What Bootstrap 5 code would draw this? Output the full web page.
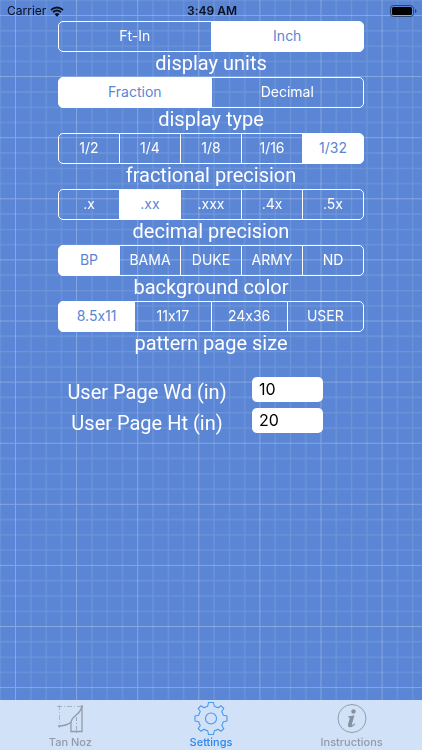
<!DOCTYPE html>
<html lang="en">
<head>
<meta charset="utf-8">
<meta name="viewport" content="width=device-width, initial-scale=1">
<title>Settings</title>
<link href="https://cdn.jsdelivr.net/npm/bootstrap@5.3.0/dist/css/bootstrap.min.css" rel="stylesheet">
<style>
  :root { --paper: #5a86d5; }
  body { background: var(--paper); font-family: Inter, "Liberation Sans", sans-serif; font-feature-settings: "calt" 0; color: #fff; }
  .blueprint { z-index: -1; }
  .status { display: grid; grid-template-columns: 1fr auto 1fr; height: 21px; padding: 0 5px 0 7px; color: #0b1020; font-size: 12px; line-height: 22px; }
  .status svg { display: block; }
  .settings { padding: 0 58px; }
  .segments { height: 31px; }
  .segments .btn {
    --bs-btn-color: #fff; --bs-btn-border-color: #fff;
    --bs-btn-hover-color: #fff; --bs-btn-hover-border-color: #fff;
    --bs-btn-active-color: var(--paper); --bs-btn-active-bg: #fff; --bs-btn-active-border-color: #fff;
    --bs-btn-border-radius: 5px;
    flex: 1 1 0; padding: 0; font-size: 14px; line-height: 28px;
  }
  .caption, .page-size label { font-family: Roboto, "Liberation Sans", sans-serif; font-size: 20px; text-align: center; }
  .caption { line-height: 22px; margin-bottom: 3px; }
  .page-size { display: grid; grid-template-columns: 178px 71px; column-gap: 16px; margin-top: 20px; }
  .page-size label { line-height: 31px; white-space: nowrap; }
  .page-size .form-control { height: 25px; padding: 0 7px; border: 0; border-radius: 5px; font-size: 16px; line-height: 25px; color: #000; background: #fff; }
  .tabs { background: #d1e1f8; height: 50px; font-size: 11px; line-height: 14px; font-weight: 500; }
  .tabs a { color: #939ba8; padding-top: 2px; }
  .tabs a.active { color: #2d86e8; }
  .tabs svg { display: block; }
</style>
<script src="https://cdn.jsdelivr.net/npm/bootstrap@5.3.0/dist/js/bootstrap.bundle.min.js"></script>
</head>
<body class="d-flex flex-column min-vh-100">
<svg class="blueprint position-fixed top-0 start-0 w-100 h-100" aria-hidden="true">
  <defs>
    <pattern id="grid" width="611" height="611" patternUnits="userSpaceOnUse" patternTransform="translate(15 15) scale(.1)">
      <path d="M158 0V611M311 0V611M464 0V611M0 158H611M0 311H611M0 464H611" stroke="#fff" stroke-opacity=".12" stroke-width="13"/>
      <path d="M5 0V611M0 5H611" stroke="#fff" stroke-opacity=".27" stroke-width="10"/>
    </pattern>
  </defs>
  <rect width="100%" height="100%" fill="url(#grid)"/>
</svg>

<header class="status">
  <div class="d-flex align-items-center gap-1">
    <span>Carrier</span>
    <svg width="14" height="11" viewBox="0 0 14 11" fill="none" stroke="#0b1020"><path d="M1 4Q7-1 13 4M3 6.300Q7 2.800 11 6.300" stroke-width="1.800"/><path d="M4.600 8.200Q7 6 9.400 8.200L7 10.700Z" fill="#0b1020" stroke="none"/></svg>
  </div>
  <div class="fw-semibold">3:49 AM</div>
  <div class="d-flex align-items-center justify-content-end">
    <svg width="27" height="12" viewBox="0 0 27 12"><rect x=".5" y=".5" width="23" height="11" rx="3" fill="none" stroke="#2c426d"/><rect x="2" y="2" width="20" height="8" rx="1.500" fill="#000"/><path d="M25 4Q26.500 4.500 26.500 6T25 8Z" fill="#2c426d"/></svg>
  </div>
</header>

<main class="settings flex-grow-1">
  <fieldset class="d-flex flex-column">
    <div class="btn-group segments" role="group" aria-labelledby="c-units">
      <input class="btn-check" type="radio" name="units" id="u1"><label class="btn" for="u1">Ft-In</label>
      <input class="btn-check" type="radio" name="units" id="u2" checked><label class="btn" for="u2">Inch</label>
    </div>
    <div class="caption" id="c-units">display units</div>
  </fieldset>
  <fieldset class="d-flex flex-column">
    <div class="btn-group segments" role="group" aria-labelledby="c-type">
      <input class="btn-check" type="radio" name="type" id="t1" checked><label class="btn" for="t1">Fraction</label>
      <input class="btn-check" type="radio" name="type" id="t2"><label class="btn" for="t2">Decimal</label>
    </div>
    <div class="caption" id="c-type">display type</div>
  </fieldset>
  <fieldset class="d-flex flex-column">
    <div class="btn-group segments" role="group" aria-labelledby="c-frac">
      <input class="btn-check" type="radio" name="frac" id="f1"><label class="btn" for="f1">1/2</label>
      <input class="btn-check" type="radio" name="frac" id="f2"><label class="btn" for="f2">1/4</label>
      <input class="btn-check" type="radio" name="frac" id="f3"><label class="btn" for="f3">1/8</label>
      <input class="btn-check" type="radio" name="frac" id="f4"><label class="btn" for="f4">1/16</label>
      <input class="btn-check" type="radio" name="frac" id="f5" checked><label class="btn" for="f5">1/32</label>
    </div>
    <div class="caption" id="c-frac">fractional precision</div>
  </fieldset>
  <fieldset class="d-flex flex-column">
    <div class="btn-group segments" role="group" aria-labelledby="c-dec">
      <input class="btn-check" type="radio" name="dec" id="d1"><label class="btn" for="d1">.x</label>
      <input class="btn-check" type="radio" name="dec" id="d2" checked><label class="btn" for="d2">.xx</label>
      <input class="btn-check" type="radio" name="dec" id="d3"><label class="btn" for="d3">.xxx</label>
      <input class="btn-check" type="radio" name="dec" id="d4"><label class="btn" for="d4">.4x</label>
      <input class="btn-check" type="radio" name="dec" id="d5"><label class="btn" for="d5">.5x</label>
    </div>
    <div class="caption" id="c-dec">decimal precision</div>
  </fieldset>
  <fieldset class="d-flex flex-column">
    <div class="btn-group segments" role="group" aria-labelledby="c-bg">
      <input class="btn-check" type="radio" name="bg" id="b1" checked><label class="btn" for="b1">BP</label>
      <input class="btn-check" type="radio" name="bg" id="b2"><label class="btn" for="b2">BAMA</label>
      <input class="btn-check" type="radio" name="bg" id="b3"><label class="btn" for="b3">DUKE</label>
      <input class="btn-check" type="radio" name="bg" id="b4"><label class="btn" for="b4">ARMY</label>
      <input class="btn-check" type="radio" name="bg" id="b5"><label class="btn" for="b5">ND</label>
    </div>
    <div class="caption" id="c-bg">background color</div>
  </fieldset>
  <fieldset class="d-flex flex-column">
    <div class="btn-group segments" role="group" aria-labelledby="c-size">
      <input class="btn-check" type="radio" name="size" id="s1" checked><label class="btn" for="s1">8.5x11</label>
      <input class="btn-check" type="radio" name="size" id="s2"><label class="btn" for="s2">11x17</label>
      <input class="btn-check" type="radio" name="size" id="s3"><label class="btn" for="s3">24x36</label>
      <input class="btn-check" type="radio" name="size" id="s4"><label class="btn" for="s4">USER</label>
    </div>
    <div class="caption" id="c-size">pattern page size</div>
  </fieldset>

  <div class="page-size">
    <label for="wd">User Page Wd (in)</label><input class="form-control" id="wd" type="text" inputmode="decimal" value="10">
    <label for="ht">User Page Ht (in)</label><input class="form-control" id="ht" type="text" inputmode="decimal" value="20">
  </div>
</main>

<nav class="tabs sticky-bottom d-flex">
  <a href="#noz" class="d-flex flex-column align-items-center flex-fill w-100 text-decoration-none">
    <svg width="32" height="33" viewBox="0 0 32 33" fill="none" stroke="#939ba8">
      <path d="M3 4.500H30" stroke-dasharray="5 2 1 2" stroke-opacity=".7"/><path d="M5.500 3V26" stroke-dasharray="5 2 1 2" stroke-opacity=".6"/>
      <path d="M4 24Q13 24 17 20C18 13 26 14 28 4" stroke-width="1.300"/><path d="M17 20V29.500H28V3" stroke-width="1.300"/><path d="M22.500 15V31" stroke-dasharray="4 2 1 2" stroke-width=".8"/>
    </svg>
    <span>Tan Noz</span>
  </a>
  <a href="#settings" class="active d-flex flex-column align-items-center flex-fill w-100 text-decoration-none" aria-current="page">
    <svg width="34" height="33" viewBox="-17 -16.500 34 33" fill="none" stroke="#4a98ec" stroke-width="1.100" stroke-linejoin="round">
      <path d="M-2.500-16H2.500L3.300-12.300Q5.300-11.700 7-10.700L10-12.800L12.800-10L10.700-7Q11.700-5.300 12.300-3.300L16-2.500V2.500L12.300 3.300Q11.700 5.300 10.700 7L12.800 10L10 12.800L7 10.700Q5.300 11.700 3.300 12.300L2.500 16H-2.500L-3.300 12.300Q-5.300 11.700-7 10.700L-10 12.800L-12.800 10L-10.700 7Q-11.700 5.300-12.300 3.300L-16 2.500V-2.500L-12.300-3.300Q-11.700-5.300-10.700-7L-12.800-10L-10-12.800L-7-10.700Q-5.300-11.700-3.300-12.300Z"/>
      <circle r="5.500"/>
    </svg>
    <span>Settings</span>
  </a>
  <a href="#instructions" class="d-flex flex-column align-items-center flex-fill w-100 text-decoration-none">
    <svg width="32" height="33" viewBox="0 0 32 33" fill="none" stroke="#939ba8">
      <circle cx="16" cy="16.500" r="14" stroke-width="1"/>
      <circle cx="17.500" cy="9.500" r="2.200" fill="#87909e" stroke="none"/>
      <path d="M12 14.500L18.500 13.300L15.800 22.500Q15.700 23.700 18.700 21.500L19.200 22.200Q16 25.500 13.300 25.200Q11.400 24.700 12 22.500L13.900 16Q13.900 15.200 12 15.500Z" fill="#87909e" stroke="none"/>
    </svg>
    <span>Instructions</span>
  </a>
</nav>
</body>
</html>
